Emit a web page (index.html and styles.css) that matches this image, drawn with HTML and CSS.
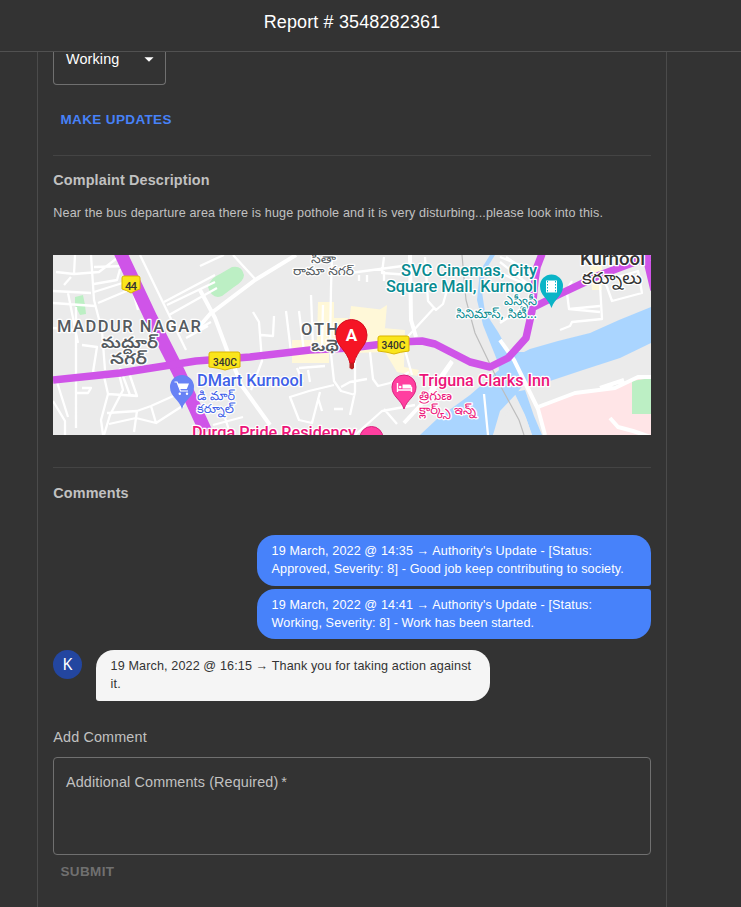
FILE: index.html
```html
<!DOCTYPE html>
<html lang="en">
<head>
<meta charset="utf-8">
<title>Report # 3548282361</title>
<link rel="stylesheet" href="styles.css">
</head>
<body>
<div class="app">
  <header class="topbar"><h1>Report # 3548282361</h1></header>
  <main class="panel">
    <div class="select"><span>Working</span><svg class="caret" viewBox="0 0 24 24"><path d="M7 10l5 5 5-5z"/></svg></div>
    <button class="btn primary">MAKE UPDATES</button>
    <section class="description">
      <h2>Complaint Description</h2>
      <p>Near the bus departure area there is huge pothole and it is very disturbing...please look into this.</p>
      <svg class="map" viewBox="53 255 598 180">
        <rect class="land" x="53" y="255" width="598" height="180"/>
        <g class="buildings">
          <path d="M318 302h16v16h14v30h-19v15h-37v-23h25zM351 306l34 4-2 18 22 2-1 37 15 3-2 6-20-4-12-20-30 1-7-22zM376 312l11-7-2 23-10 2zM590 265h12v25h-10z"/>
        </g>
        <path class="park" d="M208 287q2-9 12-13l12-7q10-2 12 8 0 6-10 12l-12 9q-10 4-14-9zM75 297l8-2 2 10 1 9-6 1-5-10z"/>
        <g class="water">
          <path d="M420 435L437 419 470 395 499 370 496 352 524 352 530 349 558 341 590 333 619 320 651 307V343L620 358 583 370 550 381 523 385 517 393 500 411 493 435z"/>
          <path d="M490 255L480 271 477 300 483 325 497 360H514L498 332 485 312 482 292 485 271 495 255z"/>
          <path d="M514 392L525 390 534 416 542 435H532L525 415z"/>
        </g>
        <path class="ground" d="M493 435L500 422 517 401 526 418 532 435z"/>
        <path class="district" d="M538 409L575 394 615 389 638 379 651 379V435H545z"/>
        <path class="park" d="M632 381L651 378V414H632z"/>
        <g class="rail"><path d="M462 255L466 300 475 333 500 385 519 420 524 435"/></g>
        <g class="streets">
          <path d="M75 255L74 274 56 272M74 274L99 272 121 255M91 255L94 300 102 331 105 370M94 267L126 266M94 284L117 280 120 269M64 285L71 277M53 291L91 293M53 303L95 306M94 292L132 280M98 303L136 287M68 293L78 343M76 307L76 428M53 328L73 330M82 345L97 347 93 372 105 375M82 388H91L88 393H76M57 382L68 417M53 401L65 421 65 435M103 372L108 394 101 420 103 435M118 370L123 390 110 415 104 435M120 368L130 395 137 396 128 370M107 413L137 411 151 406 180 393M109 424L136 418 156 423 184 405M137 411L134 432M151 406L156 423M108 394L137 396"/>
          <path d="M140 255L186 350M125 262L138 310"/>
          <path class="wide" d="M200 290L215 318 227 350 242 386 270 425M198 328L210 314 255 280 296 255"/>
          <path d="M164 302L215 275M169 315L217 288M167 305L215 282M186 338L208 326M233 255L256 280M200 266L215 259 224 255M200 328L211 322M213 425L243 417M225 418L229 430"/>
          <path d="M253 312L259 322 262 361 251 390M261 335L273 336 274 316M286 311L291 352M299 311L304 352M311 295L313 347M323 305L322 345M332 257L331 288 330 345 334 381 341 391 355 395M299 368L325 366M297 368L303 382M308 370L310 382M334 385L309 391 290 397 299 420 312 423 320 392M318 398L322 411M334 409L343 409M341 387L350 382 367 379M370 352L373 379 378 386 390 383 409 372M355 342V392L350 415M384 257L382 273 410 275 410 265 350 273M359 275V281M367 275V282M384 271V281M401 284H430M425 257L428 301 436 310 443 304 447 290M435 307L400 345M405 350L412 375M484 394L488 435M384 409L397 424M355 435L382 411 415 405M500 257L537 272M500 262L528 284M506 257L521 267M500 273L535 288M500 323L530 303M566 291L572 281M567 293L569 309 600 306M569 309L600 312M600 285L602 319 572 322 570 326 560 330M607 287L612 301 642 293 638 271 604 281z"/>
          <path class="wide" d="M410 255L411 320 416 337M452 362L430 395 404 423 M452 361L430 392M500 340L514 360 538 409 545 435M538 407L575 393 615 388 638 377 651 377M600 388L624 380M610 418L618 427 633 431 651 437"/>
        </g>
        <g class="highways">
          <path class="trunk" d="M120 252L151 318 179 373 206 432"/>
          <path d="M53 380L120 373 196 361 250 357 310 350 350 348 400 342 422 341 435 344 470 362 490 367 508 358 526 338 532 311 535 280 537 267 542 254M534 307L560 294 600 275 651 256M645 252L654 290"/>
        </g>
        <g class="shields">
          <path d="M124 276h14q2 0 2 2v11q-4 1-9 4-5-3-9-4v-11q0-2 2-2z"/><path d="M211 352h27q2 0 2 2v13q-9 1-15 3-6-2-16-3v-13q0-2 2-2z"/><path d="M380 336h27q2 0 2 2v13q-9 1-15 3-6-2-16-3v-13q0-2 2-2z"/>
        </g>
        <g class="shield-text"><text x="125" y="289.500" textLength="12">44</text><text x="213" y="365.500" textLength="24" lengthAdjust="spacingAndGlyphs">340C</text><text x="381.500" y="349" textLength="24" lengthAdjust="spacingAndGlyphs">340C</text></g>
        <g class="label area">
          <text x="57" y="332" textLength="144">MADDUR NAGAR</text><text x="301" y="335" textLength="37">OTH</text>
          <text class="te bold" x="101" y="348" textLength="57" lengthAdjust="spacingAndGlyphs">మద్దూర్</text><text class="te bold" x="110" y="364" textLength="37" lengthAdjust="spacingAndGlyphs">నగర్</text>
          <text class="te small" x="311" y="262.500" textLength="25" lengthAdjust="spacingAndGlyphs">సీతా</text><text class="te small" x="293" y="274.500" textLength="61" lengthAdjust="spacingAndGlyphs">రామా నగర్</text>
          <text class="te bold" x="311" y="351" textLength="28" lengthAdjust="spacingAndGlyphs">ఒథె</text>
        </g>
        <g class="label city"><text x="580" y="265" textLength="65" lengthAdjust="spacingAndGlyphs">Kurnool</text><text class="te" x="582" y="284" textLength="60" lengthAdjust="spacingAndGlyphs">కర్నూలు</text></g>
        <g class="label teal"><text x="401" y="276" textLength="136" lengthAdjust="spacingAndGlyphs">SVC Cinemas, City</text><text x="386" y="292" textLength="151" lengthAdjust="spacingAndGlyphs">Square Mall, Kurnool</text><text class="te" x="504" y="305" textLength="33" lengthAdjust="spacingAndGlyphs">ఎస్వీసీ</text><text class="te" x="456" y="318" textLength="81" lengthAdjust="spacingAndGlyphs">సినిమాస్, సిటీ...</text></g>
        <g class="label blue"><text x="197" y="386" textLength="106" lengthAdjust="spacingAndGlyphs">DMart Kurnool</text><text class="te" x="197" y="400" textLength="38" lengthAdjust="spacingAndGlyphs">డి మార్</text><text class="te" x="197" y="412.500" textLength="37" lengthAdjust="spacingAndGlyphs">కర్నూల్</text></g>
        <g class="label pink"><text x="419" y="386" textLength="131" lengthAdjust="spacingAndGlyphs">Triguna Clarks Inn</text><text class="te" x="419" y="400" textLength="33" lengthAdjust="spacingAndGlyphs">త్రిగుణ</text><text class="te" x="419" y="414" textLength="57" lengthAdjust="spacingAndGlyphs">క్లార్క్స్ ఇన్న్</text><text x="192" y="438" textLength="164" lengthAdjust="spacingAndGlyphs">Durga Pride Residency</text></g>
        <path class="pin-blue" d="M182 409C179 399 170 397 170 387a12 12 0 0 1 24 0C194 397 185 399 182 409z"/>
        <path class="cart" d="M177.700 383.500h11.300l-2.200 5.500h-7z"/><path class="cart-line" d="M174.500 382h2.500l3.500 9h7.500"/><circle class="white" cx="179.800" cy="393.800" r="1.200"/><circle class="white" cx="187" cy="393.800" r="1.200"/>
        <path class="pin-pink" d="M404 409C401 399 392 397 392 387a12 12 0 0 1 24 0C416 397 407 399 404 409z"/>
        <path class="bed" d="M397.500 383v9M397.500 390h14v2M411.500 391v-4"/><path class="white" d="M402.500 388.500v-4h7q2 0 2 2v2z"/><circle class="white" cx="400.200" cy="387" r="1.300"/>
        <circle class="pin-pink" cx="371.500" cy="438" r="11.500"/>
        <path class="pin-teal" d="M551.500 308C548 298 540 296 540 286a11.500 11.500 0 0 1 23 0C563 296 555 298 551.500 308z"/>
        <rect class="white" x="546" y="280.500" width="11" height="12"/><path class="film" d="M547.500 281v11M555.500 281v11"/>
        <path class="marker-tip" d="M349.500 353h4.500v15l-2 1.500-2.500-1.500z"/>
        <path class="marker" d="M350 363C347 350 336 346 336 335a15.500 15.500 0 0 1 31 0C367 346 357 350 354 363z"/>
        <text class="marker-text" x="351.500" y="341" text-anchor="middle">A</text>
      </svg>
    </section>
    <section class="comments">
      <h2>Comments</h2>
      <div class="bubble mine first">19 March, 2022 @ 14:35 → Authority's Update - [Status: Approved, Severity: 8] - Good job keep contributing to society.</div>
      <div class="bubble mine last">19 March, 2022 @ 14:41 → Authority's Update - [Status: Working, Severity: 8] - Work has been started.</div>
      <div class="reply"><div class="avatar">K</div><div class="bubble theirs">19 March, 2022 @ 16:15 → Thank you for taking action against it.</div></div>
    </section>
    <div class="add-label">Add Comment</div>
    <div class="textarea">Additional Comments (Required)&thinsp;*</div>
    <button class="btn disabled">SUBMIT</button>
  </main>
</div>
</body>
</html>
```
FILE: styles.css
```css
* { box-sizing: border-box; }
body { margin: 0; background: #333; color: #c1c1c1; font-family: "Liberation Sans", Arial, sans-serif; }
.app { display: flex; flex-direction: column; height: 907px; overflow: hidden; }
.topbar { flex: none; height: 52px; border-bottom: 1px solid #515151; padding: 9px 37px 0 0; z-index: 1; }
h1 { margin: 0; color: #fff; font-size: 18px; line-height: 26px; font-weight: 400; letter-spacing: .135px; text-align: center; }
.panel { flex: 1; width: 630px; margin-left: 37px; padding: 0 15px; border: solid #4b4b4b; border-width: 0 1px; }
.select { display: flex; justify-content: space-between; width: 113px; height: 33px; padding: 0 5.500px 0 12px; border: 1px solid #707070; border-top: 0; border-radius: 0 0 4px 4px; color: #fff; font-size: 14.400px; line-height: 15px; letter-spacing: .135px; }
.caret { width: 22px; height: 22px; margin-top: -4px; fill: #fff; }
.btn { display: block; border: 0; background: none; padding: 0 7.500px; font: bold 13.500px/24px "Liberation Sans", Arial, sans-serif; letter-spacing: .36px; }
.primary { margin-top: 23px; color: #4782f8; }
.disabled { margin-top: 5px; color: #707070; }
section { border-top: 1px solid #444; }
h2 { margin: 0; font-size: 14.400px; line-height: 22px; letter-spacing: .135px; }
.description { margin-top: 23px; padding-top: 13px; }
.description h2, .description p, .comments h2, .add-label { padding-left: .3px; }
.description p { margin: 13px 0 0; font-size: 12.600px; line-height: 18px; letter-spacing: .135px; white-space: nowrap; }
.map { display: block; width: 598px; height: 180px; margin-top: 33px; overflow: hidden; }
.comments { margin-top: 32px; padding-top: 14px; }
.bubble { width: 394px; height: 51px; padding: 7px 14px 7px 14.600px; font-size: 12.600px; line-height: 18px; letter-spacing: .118px; }
.mine { margin-left: auto; background: #4782fa; color: #fff; }
.first { margin-top: 31px; border-radius: 18px 18px 3px 18px; }
.last { height: 50px; margin-top: 3px; border-radius: 18px 3px 18px 18px; }
.reply { display: flex; margin-top: 11px; gap: 14px; }
.avatar { width: 29px; height: 29px; border-radius: 50%; background: #2346a0; color: #fff; font: 16px/29px "Noto Sans", sans-serif; text-align: center; }
.theirs { background: #f5f5f5; color: #333; border-radius: 18px 18px 18px 3px; }
.add-label { margin-top: 25px; font-size: 14.400px; line-height: 22px; letter-spacing: .135px; }
.textarea { height: 98px; width: 598px; margin-top: 9px; padding: 14px 12px; border: 1px solid #707070; border-radius: 4px; font-size: 14.400px; line-height: 20px; letter-spacing: .12px; }
.land, .ground { fill: #ebebeb; }
.buildings { fill: #fff8d8; }
.park { fill: #bcefc4; }
.water { fill: #aad5ff; }
.district { fill: #ffe5e7; }
.rail { fill: none; stroke: #bdbdbd; stroke-width: 1.200; }
.streets { fill: none; stroke: #fff; stroke-width: 2.300; stroke-linejoin: round; }
.streets .wide { stroke-width: 4; }
.highways { fill: none; stroke: #cf54e8; stroke-width: 7.500; stroke-linejoin: round; }
.highways .trunk { stroke-width: 13; }
.shields { fill: #fae51b; stroke: #d9b500; stroke-width: 1; }
.shield-text { fill: #333; font: 500 11.500px Roboto, sans-serif; }
.label { font: 500 16.500px Roboto, sans-serif; paint-order: stroke; stroke: #fff; stroke-width: 2.500px; stroke-linejoin: round; }
.label .te { font-size: 12.500px; font-family: "Noto Sans Telugu", "Noto Sans", sans-serif; font-weight: 400; }
.label .bold { font-size: 16px; font-weight: 600; }
.label .small { font-size: 12px; }
.area { fill: #555b60; }
.city { fill: #333; font-size: 18.500px; }
.city .te { font-size: 17px; }
.teal { fill: #088b91; }
.blue { fill: #3f61e8; }
.pink { fill: #ec1479; }
.pin-blue { fill: #6882f5; }
.pin-pink { fill: #ff3fa0; stroke: #d9207c; stroke-width: 1; }
.pin-teal { fill: #0ab4c7; }
.white { fill: #fff; }
.cart { fill: #fff; }
.cart-line { fill: none; stroke: #fff; stroke-width: 1.200; }
.bed { fill: none; stroke: #fff; stroke-width: 1.400; }
.film { stroke: #0ab4c7; stroke-width: 1; stroke-dasharray: 1.500 1.500; }
.marker { fill: #f51525; stroke: #d50f20; stroke-width: 1; }
.marker-tip { fill: #b7211f; }
.marker-text { fill: #fff; font: bold 17px Roboto, sans-serif; }
```
